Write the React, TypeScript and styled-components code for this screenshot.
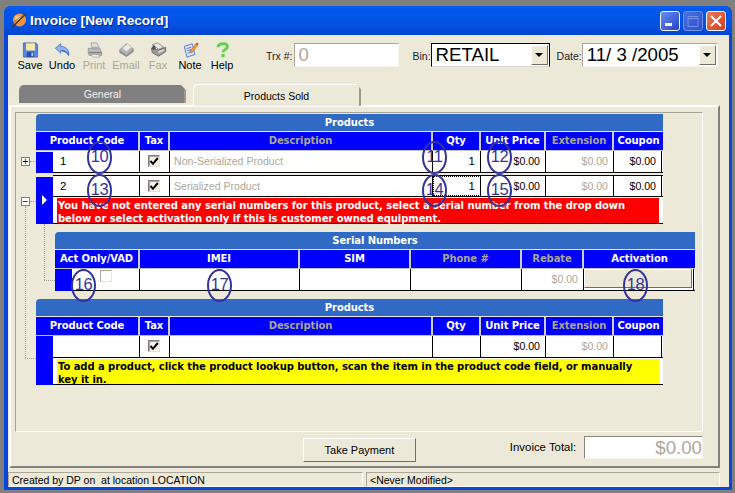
import React from 'react';
import styled, { createGlobalStyle } from 'styled-components';

const GlobalStyle = createGlobalStyle`
  html, body {
    margin: 0;
    padding: 0;
    background: #808080;
  }
  * {
    box-sizing: border-box;
  }
`;

const UI_FONT = '"Liberation Sans", Arial, sans-serif';
const GRID_FONT = '"DejaVu Sans", Verdana, sans-serif';

const Page = styled.div`
  position: relative;
  width: 735px;
  height: 493px;
  padding: 6px 3px 3px 4px;
  overflow: hidden;
  font-family: ${UI_FONT};
  font-size: 11px;
  color: #000;
`;

const Win = styled.div`
  height: 484px;
  display: flex;
  flex-direction: column;
  background: #0a46dc;
  border-radius: 7px 7px 0 0;
  padding: 0 3px 3px 4px;
`;

const TitleBar = styled.div`
  height: 29px;
  margin: 0 -3px 0 -4px;
  padding: 0 6px 0 7px;
  display: flex;
  align-items: center;
  border-radius: 7px 7px 0 0;
  background: linear-gradient(#0a5ef0 0%, #0256ea 12%, #0253e4 60%, #0344d0 100%);
`;

const TitleText = styled.span`
  margin-left: 3px;
  font-size: 13.6px;
  font-weight: 700;
  color: #fff;
  text-shadow: 1px 1px 0 #0a2a90;
`;

const WinButtons = styled.div`
  margin-left: auto;
  display: flex;
  gap: 3px;
`;

const WinButton = styled.div<{ $kind: 'min' | 'max' | 'close' }>`
  width: 20px;
  height: 20px;
  border-radius: 3px;
  display: flex;
  align-items: center;
  justify-content: center;
  border: 1px solid ${(p) => (p.$kind === 'max' ? '#6f8fe8' : '#f2f4ff')};
  background: ${(p) =>
    p.$kind === 'close'
      ? 'linear-gradient(135deg, #ea7a55, #cf3f1e)'
      : p.$kind === 'min'
        ? 'linear-gradient(135deg, #6a8cf0, #2445c8)'
        : 'linear-gradient(135deg, #4a70e0, #2a50cc)'};
`;

const Client = styled.div`
  flex: 1;
  display: flex;
  flex-direction: column;
  background: #ece9d8;
`;

const Toolbar = styled.div`
  height: 49px;
  display: flex;
  padding: 7px 0 0 6px;
`;

const ToolButton = styled.div<{ $disabled?: boolean }>`
  width: 32px;
  display: flex;
  flex-direction: column;
  align-items: center;
  color: ${(p) => (p.$disabled ? '#aca899' : '#000')};
  svg {
    display: block;
    width: 17px;
    height: 16px;
  }
`;

const ToolLabel = styled.span`
  line-height: 14px;
  font-size: 11px;
  white-space: nowrap;
`;

const FieldLabel = styled.label<{ $ml: number }>`
  margin: 7px 0 0 ${(p) => p.$ml}px;
  font-size: 10.5px;
  line-height: 14px;
  color: #222;
`;

const TextInput = styled.div`
  width: 105px;
  height: 24px;
  margin: 1px 0 0 2px;
  padding-left: 3px;
  background: #fff;
  border: 1px solid;
  border-color: #aca899 #f6f5ee #f6f5ee #aca899;
  color: #aca899;
  font-size: 18.6px;
  line-height: 22px;
`;

const Combo = styled.div<{ $w: number; $dark?: boolean }>`
  width: ${(p) => p.$w}px;
  height: 24px;
  margin-top: 1px;
  display: flex;
  align-items: stretch;
  justify-content: space-between;
  background: #fff;
  border: 1px solid;
  border-color: ${(p) => (p.$dark ? '#000 #000 #d8d8d0 #000' : '#aca899 #f6f5ee #f6f5ee #aca899')};
  font-size: 18.67px;
  line-height: 22px;
  white-space: pre;
  padding-left: 4px;
`;

const ComboButton = styled.div`
  width: 17px;
  margin: 1px;
  display: flex;
  align-items: center;
  justify-content: center;
  background: #ece9d8;
  border: 1px solid;
  border-color: #fff #716f64 #716f64 #fff;
  &::after {
    content: '';
    border: 4px solid transparent;
    border-top: 4px solid #000;
    border-bottom: 0;
  }
`;

const Tabs = styled.div`
  height: 21px;
  display: flex;
  align-items: flex-end;
  padding-left: 11px;
  position: relative;
  z-index: 1;
`;

const Tab = styled.div<{ $active?: boolean }>`
  width: ${(p) => (p.$active ? 168 : 167)}px;
  height: ${(p) => (p.$active ? 22 : 18)}px;
  margin: ${(p) => (p.$active ? '0 0 -1px 7px' : '0 0 2px 0')};
  display: flex;
  align-items: center;
  justify-content: center;
  padding-left: ${(p) => (p.$active ? 0 : 2)}px;
  font-size: 10.5px;
  background: ${(p) => (p.$active ? '#ece9d8' : '#808080')};
  color: ${(p) => (p.$active ? '#000' : '#f0f0f0')};
  border-radius: 5px 0 0 0;
  border-top: ${(p) => (p.$active ? '1px solid #fff' : '0')};
  border-left: ${(p) => (p.$active ? '1px solid #fff' : '0')};
  border-right: 2px solid #9c9a8c;
  clip-path: polygon(0 0, calc(100% - 5px) 0, 100% 5px, 100% 100%, 0 100%);
`;

const TabPage = styled.div`
  width: 711px;
  height: 363px;
  margin-left: 1px;
  display: flex;
  flex-direction: column;
  padding: 5px 15px 0 4px;
  border: 2px solid;
  border-color: #fff #808080 #808080 #fff;
`;

const GroupBox = styled.div`
  height: 320px;
  flex: none;
  padding: 1px 0 0 20px;
  border: 1px solid;
  border-color: #a5a396 #fff #fff #a5a396;
`;

const Table = styled.div<{ $w: number; $ml?: number; $mt?: number }>`
  width: ${(p) => p.$w}px;
  margin: ${(p) => p.$mt ?? 0}px 0 0 ${(p) => p.$ml ?? 0}px;
  font-family: ${GRID_FONT};
`;

const TableTitle = styled.div`
  height: 17px;
  margin-bottom: 1px;
  border-radius: 4px 0 0 0;
  background: #316ac5;
  color: #fff;
  text-align: center;
  font-size: 10px;
  font-weight: 700;
  line-height: 17px;
  letter-spacing: -0.1px;
`;

const HeaderRow = styled.div<{ $cols: string }>`
  display: grid;
  grid-template-columns: ${(p) => p.$cols};
  height: 19px;
  border-bottom: 1px solid #c4c2b6;
`;

const HeaderCell = styled.div<{ $muted?: boolean }>`
  background: #0000ff;
  border-right: 2px solid #cfcdc0;
  color: ${(p) => (p.$muted ? '#a8a890' : '#fff')};
  text-align: center;
  font-size: 10px;
  font-weight: 700;
  line-height: 18px;
  letter-spacing: -0.1px;
  white-space: nowrap;
  overflow: hidden;
  &:last-child {
    border-right: 0;
  }
`;

const RowBlock = styled.div`
  display: flex;
`;

const Selector = styled.div<{ $top?: number }>`
  width: 17px;
  flex: none;
  margin-top: ${(p) => p.$top ?? 0}px;
  display: flex;
  align-items: center;
  justify-content: center;
  background: #0000ff;
`;

const SelectorArrow = styled.span`
  border: 5px solid transparent;
  border-left: 5px solid #fff;
  border-right: 0;
  margin-top: -2px;
`;

const RowBody = styled.div`
  flex: 1;
  min-width: 0;
  display: flex;
  flex-direction: column;
`;

const Cells = styled.div<{ $cols: string; $topLine?: boolean }>`
  display: grid;
  grid-template-columns: ${(p) => p.$cols};
  height: 22px;
  background: #fff;
  border-top: ${(p) => (p.$topLine ? '1px solid #000' : '0')};
  border-bottom: 1px solid #000;
`;

const Cell = styled.div<{ $align?: 'left' | 'right' | 'center'; $muted?: boolean; $focus?: boolean }>`
  display: flex;
  align-items: center;
  justify-content: ${(p) =>
    p.$align === 'right' ? 'flex-end' : p.$align === 'center' ? 'center' : 'flex-start'};
  padding: 0 5px 1px 4px;
  border-right: 1px solid #000;
  font-family: ${UI_FONT};
  font-size: 10.6px;
  color: ${(p) => (p.$muted ? '#aca899' : '#000')};
  white-space: nowrap;
  outline: ${(p) => (p.$focus ? '1px dotted #000' : 'none')};
  outline-offset: -1px;
`;

const CodeText = styled.span`
  margin-left: 3px;
  font-size: 11.5px;
`;

const CheckBox = styled.span`
  width: 12px;
  height: 12px;
  display: flex;
  align-items: center;
  justify-content: center;
  background: #f4f2e8;
  border: 1px solid;
  border-color: #808080 #e6e4d8 #e6e4d8 #808080;
  box-shadow: inset 1px 1px 0 #a8a69a;
  svg {
    width: 10px;
    height: 10px;
  }
`;

const ActCheck = styled(CheckBox)`
  margin: -6px 0 0 24px;
  background: #fff;
  border-color: #aca899 #e6e4d8 #e6e4d8 #aca899;
  box-shadow: none;
`;

const SpacerRow = styled.div`
  height: 2px;
`;

const Message = styled.div<{ $fg: string }>`
  height: 27px;
  padding: 1px 3px 0 4px;
  background: #fff;
  border-bottom: 1px solid #000;
  font-family: ${GRID_FONT};
  font-size: 10px;
  font-weight: 700;
  line-height: 13px;
  letter-spacing: -0.06px;
  white-space: nowrap;
  color: ${(p) => p.$fg};
`;

const MessageFill = styled.div<{ $bg: string }>`
  width: 602px;
  height: 25px;
  padding: 1px 0 0 1px;
  background: ${(p) => p.$bg};
`;

const ActivateButton = styled.div`
  margin: 0 1px 2px 0;
  background: #ece9d8;
  border: 1px solid;
  border-color: #fff #716f64 #716f64 #fff;
`;

const ActivateCell = styled.div`
  display: flex;
  flex-direction: column;
  > * {
    flex: 1;
  }
  border-right: 1px solid #000;
`;

const Footer = styled.div`
  flex: 1;
  display: flex;
  align-items: flex-start;
  padding-left: 288px;
`;

const PayButton = styled.div`
  width: 113px;
  height: 24px;
  margin-top: 6px;
  display: flex;
  align-items: center;
  justify-content: center;
  background: #ece9d8;
  border: 1px solid;
  border-color: #fff #716f64 #716f64 #fff;
  font-size: 11px;
`;

const TotalLabel = styled.span`
  margin: 8px 8px 0 94px;
  line-height: 14px;
  font-size: 11.4px;
  white-space: nowrap;
`;

const TotalInput = styled.div`
  width: 119px;
  height: 23px;
  margin-top: 4px;
  background: #fff;
  border: 1px solid;
  border-color: #8a887c #f6f5ee #f6f5ee #8a887c;
  color: #aca899;
  text-align: right;
  font-size: 18.67px;
  line-height: 21px;
`;

const StatusBar = styled.div`
  height: 15px;
  margin-top: 4px;
  display: flex;
  gap: 3px;
`;

const StatusPanel = styled.div<{ $w: number }>`
  width: ${(p) => p.$w}px;
  padding-left: 3px;
  border: 1px solid;
  border-color: #aca899 #fff #fff #aca899;
  font-size: 10.5px;
  line-height: 14px;
  white-space: pre;
`;

// annotation rings drawn over the grids, page coordinates
const Marker = styled.div<{ $x: number; $y: number }>`
  position: absolute;
  left: ${(p) => p.$x}px;
  top: ${(p) => p.$y}px;
  width: 25px;
  height: 33px;
  padding-bottom: 2px;
  display: flex;
  align-items: center;
  justify-content: center;
  border: 2px solid #34349a;
  border-radius: 50%;
  color: #34349a;
  font-size: 16.5px;
  letter-spacing: -0.5px;
  white-space: nowrap;
`;

const Expander = styled.div<{ $y: number }>`
  position: absolute;
  left: 21px;
  top: ${(p) => p.$y}px;
  width: 9px;
  height: 9px;
  display: flex;
  align-items: center;
  justify-content: center;
  background: #fff;
  border: 1px solid #808080;
  font-size: 10px;
  line-height: 7px;
  color: #000;
`;

const DotLine = styled.div<{ $x: number; $y: number; $w?: number; $h?: number }>`
  position: absolute;
  left: ${(p) => p.$x}px;
  top: ${(p) => p.$y}px;
  width: ${(p) => p.$w ?? 1}px;
  height: ${(p) => p.$h ?? 1}px;
  border-left: ${(p) => (p.$h ? '1px dotted #a0a0a0' : '0')};
  border-top: ${(p) => (p.$w ? '1px dotted #a0a0a0' : '0')};
`;

const productHead = '104px 30px 263px 48px 65px 68px 49px';
const productCells = '87px 30px 263px 48px 65px 68px 48px';
const serialHead = '85px 160px 111px 111px 62px 111px';
const serialCells = '68px 160px 111px 111px 62px 110px';

const Tick = () => (
  <svg viewBox="0 0 10 10">
    <path d="M1.5 5 L4 7.8 L8.8 2" fill="none" stroke="#000" strokeWidth="2" />
  </svg>
);

const SaveIcon = () => (
  <svg viewBox="0 0 18 18">
    <path d="M1 1h14l2 2v14H1z" fill="#5a88e0" stroke="#3a5cb0" strokeWidth="0.8" />
    <rect x="4" y="1.5" width="10" height="8" fill="#f6eca0" />
    <rect x="5" y="11" width="8" height="6" fill="#2c4ea8" />
    <rect x="10" y="12" width="2" height="4" fill="#b8ccf4" />
  </svg>
);

const UndoIcon = () => (
  <svg viewBox="0 0 18 18">
    <path d="M1 7 L7 2 V5 C12 5 17 8 16 15 C14.5 11 11 9.5 7 9.5 V12.5 Z" fill="#8fb2f0" stroke="#4a70c4" strokeWidth="0.9" />
    <path d="M8 10 C11 10 14 11 16 15" fill="none" stroke="#3a60b8" strokeWidth="1.4" />
  </svg>
);

const PrintIcon = () => (
  <svg viewBox="0 0 18 18">
    <path d="M5 1h7l2 5H6z" fill="#dedede" stroke="#8c8c8c" strokeWidth="0.7" />
    <path d="M2 7h13l2 5v3H3l-1-3z" fill="#b8b8b8" stroke="#808080" strokeWidth="0.7" />
    <path d="M3 12h14" stroke="#6e6e6e" strokeWidth="1" />
    <path d="M5 14l2 3h8l-1-3z" fill="#eee" stroke="#8c8c8c" strokeWidth="0.6" />
  </svg>
);

const EmailIcon = () => (
  <svg viewBox="0 0 18 18">
    <path d="M1 9 L9 2 L17 8 L9 15 Z" fill="#b4b4b4" stroke="#848484" strokeWidth="0.7" />
    <path d="M4 7 L10 2 L15 6 L9 11 Z" fill="#e8e8e8" stroke="#999" strokeWidth="0.5" />
    <path d="M1 9 L9 15 L17 8 V11 L9 17 L1 12 Z" fill="#8e8e8e" />
  </svg>
);

const FaxIcon = () => (
  <svg viewBox="0 0 18 18">
    <path d="M2 3 L8 1 L15 6 L9 8 Z" fill="#e6e6e6" stroke="#666" strokeWidth="0.7" />
    <path d="M1 7 L9 9 L17 6 V11 L9 16 L2 12 Z" fill="#9a9a9a" stroke="#555" strokeWidth="0.8" />
    <path d="M3 4 C1 6 1 8 3 9 L6 8 L5 4 Z" fill="#555" />
    <path d="M9 10 L15 8 V10 L9 13 Z" fill="#d6d6d6" />
  </svg>
);

const NoteIcon = () => (
  <svg viewBox="0 0 18 18">
    <path d="M2 5 L11 2 L14 14 L5 17 Z" fill="#d8e4fa" stroke="#4a74d0" strokeWidth="1" />
    <path d="M4.5 7.5 L10 5.8 M5.2 10 L10.8 8.3 M6 12.6 L11.5 11" stroke="#4a74d0" strokeWidth="1" />
    <path d="M8 11 L15 2 L17 4 L10 12.5 Z" fill="#f09a28" stroke="#b8641a" strokeWidth="0.6" />
    <path d="M15 2 L17 4 L18 2 L16.5 0.6 Z" fill="#e0402a" />
  </svg>
);

const HelpIcon = () => (
  <svg viewBox="0 0 18 18">
    <path d="M4 6 C4 1 14 0.5 14.5 5 C15 8.5 9.5 8.5 9.5 11.5" fill="none" stroke="#5fd04c" strokeWidth="3.2" />
    <rect x="7.8" y="13.6" width="3.6" height="3.4" fill="#5fd04c" />
  </svg>
);

const AppLogo = () => (
  <svg width="16" height="17" viewBox="0 0 16 17">
    <circle cx="8.5" cy="8" r="6.5" fill="#f0963a" />
    <ellipse cx="7" cy="6" rx="3.2" ry="2.4" fill="#f8c88a" />
    <path d="M1 15.5 L14.5 2" stroke="#4a3020" strokeWidth="1.2" />
    <path d="M2.5 11 C5 8 10 4 13.5 3" fill="none" stroke="#8a5a30" strokeWidth="0.7" />
  </svg>
);

const tools = [
  { label: 'Save', icon: <SaveIcon /> },
  { label: 'Undo', icon: <UndoIcon /> },
  { label: 'Print', icon: <PrintIcon />, disabled: true },
  { label: 'Email', icon: <EmailIcon />, disabled: true },
  { label: 'Fax', icon: <FaxIcon />, disabled: true },
  { label: 'Note', icon: <NoteIcon /> },
  { label: 'Help', icon: <HelpIcon /> },
];

const productColumns = [
  { title: 'Product Code' },
  { title: 'Tax' },
  { title: 'Description', muted: true },
  { title: 'Qty' },
  { title: 'Unit Price' },
  { title: 'Extension', muted: true },
  { title: 'Coupon' },
];

const serialColumns = [
  { title: 'Act Only/VAD' },
  { title: 'IMEI' },
  { title: 'SIM' },
  { title: 'Phone #', muted: true },
  { title: 'Rebate', muted: true },
  { title: 'Activation' },
];

const markers = [
  { n: 10, x: 87, y: 141 },
  { n: 11, x: 422, y: 141 },
  { n: 12, x: 487, y: 141 },
  { n: 13, x: 87, y: 174 },
  { n: 14, x: 422, y: 174 },
  { n: 15, x: 487, y: 174 },
  { n: 16, x: 71, y: 269 },
  { n: 17, x: 207, y: 269 },
  { n: 18, x: 623, y: 269 },
];

function ProductHeader() {
  return (
    <>
      <TableTitle>Products</TableTitle>
      <HeaderRow $cols={productHead}>
        {productColumns.map((c) => (
          <HeaderCell key={c.title} $muted={c.muted}>
            {c.title}
          </HeaderCell>
        ))}
      </HeaderRow>
    </>
  );
}

function ProductCells({ code, desc, focus, coupon = true, topLine }: {
  code?: string;
  desc?: string;
  focus?: boolean;
  coupon?: boolean;
  topLine?: boolean;
}) {
  return (
    <Cells $cols={productCells} $topLine={topLine}>
      <Cell><CodeText>{code}</CodeText></Cell>
      <Cell $align="center"><CheckBox><Tick /></CheckBox></Cell>
      <Cell $muted>{desc}</Cell>
      <Cell $align="right" $focus={focus}>{code && <CodeText>1</CodeText>}</Cell>
      <Cell $align="right">$0.00</Cell>
      <Cell $align="right" $muted>$0.00</Cell>
      <Cell $align="right">{coupon && '$0.00'}</Cell>
    </Cells>
  );
}

export default function App() {
  return (
    <Page>
      <GlobalStyle />
      <Win>
        <TitleBar>
          <AppLogo />
          <TitleText>Invoice [New Record]</TitleText>
          <WinButtons>
            <WinButton $kind="min">
              <svg width="12" height="12" viewBox="0 0 12 12">
                <rect x="1" y="8" width="7" height="3" fill="#fff" />
              </svg>
            </WinButton>
            <WinButton $kind="max">
              <svg width="14" height="14" viewBox="0 0 14 14">
                <path d="M2 2.5h10v10H2zM2 4.5h10" fill="none" stroke="#6f8fe8" strokeWidth="1" />
              </svg>
            </WinButton>
            <WinButton $kind="close">
              <svg width="12" height="12" viewBox="0 0 12 12">
                <path d="M1 1 L11 11 M11 1 L1 11" stroke="#fff" strokeWidth="2" />
              </svg>
            </WinButton>
          </WinButtons>
        </TitleBar>
        <Client>
          <Toolbar>
            {tools.map((t) => (
              <ToolButton key={t.label} $disabled={t.disabled}>
                {t.icon}
                <ToolLabel>{t.label}</ToolLabel>
              </ToolButton>
            ))}
            <FieldLabel $ml={28}>Trx #:</FieldLabel>
            <TextInput>0</TextInput>
            <FieldLabel $ml={13}>Bin:</FieldLabel>
            <Combo $w={119} $dark>
              RETAIL
              <ComboButton />
            </Combo>
            <FieldLabel $ml={7}>Date:</FieldLabel>
            <Combo $w={136}>
              {'11/ 3 /2005'}
              <ComboButton />
            </Combo>
          </Toolbar>
          <Tabs>
            <Tab>General</Tab>
            <Tab $active>Products Sold</Tab>
          </Tabs>
          <TabPage>
            <GroupBox>
              <Table $w={627}>
                <ProductHeader />
                <RowBlock>
                  <Selector $top={1} />
                  <RowBody>
                    <ProductCells code="1" desc="Non-Serialized Product" />
                  </RowBody>
                </RowBlock>
                <SpacerRow />
                <RowBlock>
                  <Selector $top={2}>
                    <SelectorArrow />
                  </Selector>
                  <RowBody>
                    <ProductCells code="2" desc="Serialized Product" focus topLine />
                    <Message $fg="#fff">
                      <MessageFill $bg="#ff0000">
                        You have not entered any serial numbers for this product, select a serial number from the drop down
                        <br />
                        below or select activation only if this is customer owned equipment.
                      </MessageFill>
                    </Message>
                  </RowBody>
                </RowBlock>
              </Table>

              <Table $w={640} $ml={19} $mt={8}>
                <TableTitle>Serial Numbers</TableTitle>
                <HeaderRow $cols={serialHead}>
                  {serialColumns.map((c) => (
                    <HeaderCell key={c.title} $muted={c.muted}>
                      {c.title}
                    </HeaderCell>
                  ))}
                </HeaderRow>
                <RowBlock>
                  <Selector />
                  <RowBody>
                    <Cells $cols={serialCells}>
                      <Cell>
                        <ActCheck />
                      </Cell>
                      <Cell />
                      <Cell />
                      <Cell />
                      <Cell $align="right" $muted>$0.00</Cell>
                      <ActivateCell>
                        <ActivateButton />
                      </ActivateCell>
                    </Cells>
                  </RowBody>
                </RowBlock>
              </Table>

              <Table $w={627} $mt={8}>
                <ProductHeader />
                <RowBlock>
                  <Selector />
                  <RowBody>
                    <ProductCells coupon={false} />
                    <Message $fg="#000">
                      <MessageFill $bg="#ffff00">
                        To add a product, click the product lookup button, scan the item in the product code field, or manually
                        <br />
                        key it in.
                      </MessageFill>
                    </Message>
                  </RowBody>
                </RowBlock>
              </Table>
            </GroupBox>
            <Footer>
              <PayButton>Take Payment</PayButton>
              <TotalLabel>Invoice Total:</TotalLabel>
              <TotalInput>$0.00</TotalInput>
            </Footer>
          </TabPage>
          <StatusBar>
            <StatusPanel $w={355}>Created by DP on  at location LOCATION</StatusPanel>
            <StatusPanel $w={354}>{'<Never Modified>'}</StatusPanel>
          </StatusBar>
        </Client>
      </Win>

      <DotLine $x={30} $y={161} $w={6} />
      <DotLine $x={30} $y={201} $w={6} />
      <DotLine $x={25} $y={206} $h={152} />
      <DotLine $x={25} $y={358} $w={11} />
      <DotLine $x={44} $y={224} $h={56} />
      <DotLine $x={44} $y={280} $w={11} />
      <Expander $y={157}>+</Expander>
      <Expander $y={197}>−</Expander>

      {markers.map((m) => (
        <Marker key={m.n} $x={m.x} $y={m.y}>
          {m.n}
        </Marker>
      ))}
    </Page>
  );
}
